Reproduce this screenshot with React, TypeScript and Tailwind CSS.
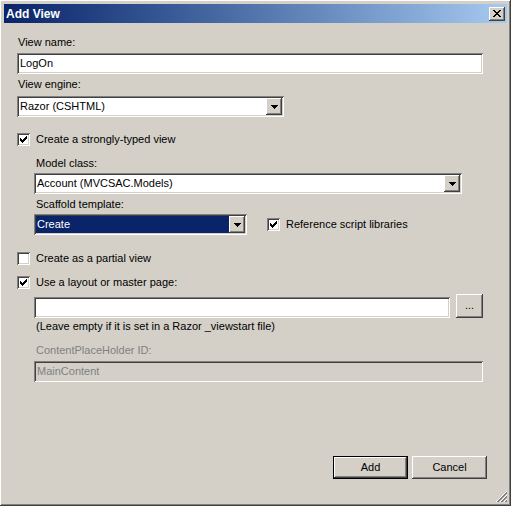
import React from "react";

const raised =
  "shadow-[inset_-1px_-1px_#404040,inset_1px_1px_#ffffff,inset_-2px_-2px_#808080,inset_2px_2px_#d4d0c8]";
const sunken =
  "shadow-[inset_1px_1px_#808080,inset_-1px_-1px_#ffffff,inset_2px_2px_#404040,inset_-2px_-2px_#d4d0c8]";

const CheckMark = () => (
  <svg width="7" height="7" viewBox="0 0 7 7" shapeRendering="crispEdges">
    <rect x="6" y="0" width="1" height="1" fill="#000" />
    <rect x="5" y="1" width="2" height="1" fill="#000" />
    <rect x="0" y="2" width="1" height="1" fill="#000" />
    <rect x="4" y="2" width="3" height="1" fill="#000" />
    <rect x="0" y="3" width="2" height="1" fill="#000" />
    <rect x="3" y="3" width="3" height="1" fill="#000" />
    <rect x="0" y="4" width="5" height="1" fill="#000" />
    <rect x="1" y="5" width="3" height="1" fill="#000" />
    <rect x="2" y="6" width="1" height="1" fill="#000" />
  </svg>
);

const Checkbox = ({ checked, label }: { checked: boolean; label: string }) => (
  <div className="flex items-center h-[13px]">
    <div className={`w-[13px] h-[13px] bg-white flex items-center justify-center ${sunken}`}>
      {checked && <CheckMark />}
    </div>
    <span className="ml-[6px] leading-[13px]">{label}</span>
  </div>
);

const DropArrow = () => (
  <svg width="7" height="4" viewBox="0 0 7 4" shapeRendering="crispEdges">
    <rect x="0" y="0" width="7" height="1" fill="#000" />
    <rect x="1" y="1" width="5" height="1" fill="#000" />
    <rect x="2" y="2" width="3" height="1" fill="#000" />
    <rect x="3" y="3" width="1" height="1" fill="#000" />
  </svg>
);

const Select = ({ value, width, selected }: { value: string; width: string; selected?: boolean }) => (
  <div className={`h-[21px] bg-white p-[2px] flex ${sunken} ${width}`}>
    <div className={`flex-1 flex items-center pl-[1px] ${selected ? "bg-[#0a246a] text-white" : ""}`}>{value}</div>
    <div className={`w-[16px] h-full bg-[#d4d0c8] flex items-center justify-center ${raised}`}>
      <DropArrow />
    </div>
  </div>
);

const Label = ({ children, className = "" }: { children: React.ReactNode; className?: string }) => (
  <div className={`h-[13px] leading-[13px] pl-[1px] ${className}`}>{children}</div>
);

export default function App() {
  return (
    <div className="w-[513px] h-[507px] bg-white">
      <div
        className={`relative w-[511px] h-[506px] bg-[#d4d0c8] p-[4px] flex flex-col text-[11px] text-black ${raised}`}
        style={{ fontFamily: '"Liberation Sans", Arial, sans-serif' }}
      >
        {/* title bar */}
        <div className="h-[19px] flex items-center justify-between bg-linear-to-r from-[#0a246a] to-[#a6caf0] pl-[2px] pr-[2px]">
          <span className="text-white font-bold text-[12px] leading-none">Add View</span>
          <div className={`w-[16px] h-[14px] bg-[#d4d0c8] flex items-center justify-center ${raised}`}>
            <svg width="8" height="7" viewBox="0 0 8 7" shapeRendering="crispEdges">
              <path d="M0 0h2v1H0zM6 0h2v1H6zM1 1h2v1H1zM5 1h2v1H5zM2 2h4v1H2zM3 3h2v1H3zM2 4h4v1H2zM1 5h2v1H1zM5 5h2v1H5zM0 6h2v1H0zM6 6h2v1H6z" fill="#000" />
            </svg>
          </div>
        </div>

        <div className="pl-[13px] flex flex-col">
          <Label className="mt-[13px]">View name:</Label>
          <div className={`mt-[4px] h-[21px] w-[466px] bg-white flex items-center pl-[3px] ${sunken}`}>LogOn</div>

          <Label className="mt-[4px]">View engine:</Label>
          <div className="mt-[5px]">
            <Select value="Razor (CSHTML)" width="w-[267px]" />
          </div>

          <div className="mt-[16px]">
            <Checkbox checked label="Create a strongly-typed view" />
          </div>

          <div className="ml-[17px] flex flex-col">
            <Label className="mt-[11px] pl-[2px]">Model class:</Label>
            <div className="mt-[3px]">
              <Select value="Account (MVCSAC.Models)" width="w-[428px]" />
            </div>
            <Label className="mt-[4px] pl-[2px]">Scaffold template:</Label>
            <div className="mt-[3px] flex items-center">
              <Select value="Create" width="w-[213px]" selected />
              <div className="ml-[20px]">
                <Checkbox checked label="Reference script libraries" />
              </div>
            </div>
          </div>

          <div className="mt-[17px]">
            <Checkbox checked={false} label="Create as a partial view" />
          </div>
          <div className="mt-[11px]">
            <Checkbox checked label="Use a layout or master page:" />
          </div>

          <div className="ml-[17px] flex flex-col">
            <div className="mt-[5px] flex items-start">
              <div className={`mt-[3px] h-[21px] w-[416px] bg-white ${sunken}`} />
              <div className={`ml-[6px] w-[27px] h-[24px] flex items-center justify-center leading-none pb-[2px] ${raised}`}>
                ...
              </div>
            </div>
            <Label className="mt-[2px] pl-[2px]">(Leave empty if it is set in a Razor _viewstart file)</Label>
            <Label className="mt-[11px] pl-[2px] text-[#808080]">ContentPlaceHolder ID:</Label>
            <div className={`mt-[4px] h-[21px] w-[449px] bg-[#d4d0c8] text-[#808080] flex items-center pl-[3px] ${sunken}`}>
              MainContent
            </div>
          </div>

          <div className="mt-[74px] flex justify-end pr-[20px] gap-[4px]">
            <div className="w-[75px] h-[23px] border border-black">
              <div className={`w-full h-full flex items-center justify-center ${raised}`}>Add</div>
            </div>
            <div className={`w-[75px] h-[23px] flex items-center justify-center ${raised}`}>Cancel</div>
          </div>
        </div>

        {/* resize grip */}
        <svg className="absolute right-[3px] bottom-[3px]" width="12" height="12" viewBox="0 0 12 12" shapeRendering="crispEdges">
          <path d="M11 0L0 11M11 4L4 11M11 8L8 11" stroke="#ffffff" strokeWidth="1" />
          <path d="M11 1L1 11M11 2L2 11M11 5L5 11M11 6L6 11M11 9L9 11M11 10L10 11" stroke="#808080" strokeWidth="1" />
        </svg>
      </div>
    </div>
  );
}
